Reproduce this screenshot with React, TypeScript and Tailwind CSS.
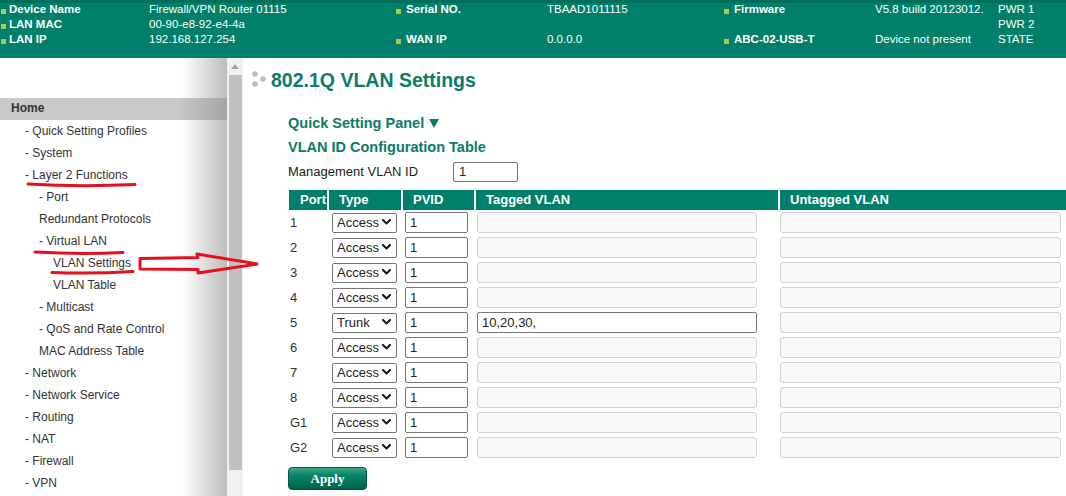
import React from "react";

const sideItems: [string, number][] = [
  ["- Quick Setting Profiles", 25],
  ["- System", 25],
  ["- Layer 2 Functions", 25],
  ["- Port", 39],
  ["Redundant Protocols", 39],
  ["- Virtual LAN", 39],
  ["VLAN Settings", 53],
  ["VLAN Table", 53],
  ["- Multicast", 39],
  ["- QoS and Rate Control", 39],
  ["MAC Address Table", 39],
  ["- Network", 25],
  ["- Network Service", 25],
  ["- Routing", 25],
  ["- NAT", 25],
  ["- Firewall", 25],
  ["- VPN", 25],
];

const rows = [
  { port: "1", type: "Access", tagged: "" },
  { port: "2", type: "Access", tagged: "" },
  { port: "3", type: "Access", tagged: "" },
  { port: "4", type: "Access", tagged: "" },
  { port: "5", type: "Trunk", tagged: "10,20,30," },
  { port: "6", type: "Access", tagged: "" },
  { port: "7", type: "Access", tagged: "" },
  { port: "8", type: "Access", tagged: "" },
  { port: "G1", type: "Access", tagged: "" },
  { port: "G2", type: "Access", tagged: "" },
];

function Bullet({ mr }: { mr: string }) {
  return <span className={`inline-block w-[5px] h-[5px] bg-[#a9c94f] mt-[4px] shrink-0 ${mr}`} />;
}

function Label({ text, first }: { text: string; first?: boolean }) {
  return (
    <div className={`flex items-center font-bold whitespace-nowrap ${first ? "pl-[1px]" : ""}`}>
      <Bullet mr={first ? "mr-[3px]" : "mr-[5px]"} />
      {text}
    </div>
  );
}

function Select({ value }: { value: string }) {
  return (
    <div className="relative w-[65px] h-[20px]">
      <select
        defaultValue={value}
        className="appearance-none w-[65px] h-[20px] border border-[#767676] rounded-[2px] bg-white text-[13px] leading-[18px] pl-[4px] text-[#222] outline-none"
      >
        <option>Access</option>
        <option>Trunk</option>
        <option>Hybrid</option>
      </select>
      <svg className="absolute right-[6px] top-[6px] pointer-events-none" width="9" height="6" viewBox="0 0 9 6">
        <path d="M1 1 L4.5 4.5 L8 1" fill="none" stroke="#111" strokeWidth="2" strokeLinecap="round" strokeLinejoin="round" />
      </svg>
    </div>
  );
}

export default function App() {
  return (
    <div className="relative w-[1066px] h-[496px] overflow-hidden bg-white font-['Liberation_Sans',Arial,sans-serif]">
      {/* Header */}
      <header className="h-[58px] bg-[linear-gradient(#00705c_0px,#00705c_3px,#00806a_3px)] text-white text-[11.5px] leading-[15px] pt-[2px]">
        <div className="grid grid-cols-[149px_247px_151px_177px_151px_123px_1fr] grid-rows-[15px_15px_15px]">
          <Label text="Device Name" first />
          <div>Firewall/VPN Router 01115</div>
          <Label text="Serial NO." />
          <div>TBAAD1011115</div>
          <Label text="Firmware" />
          <div className="whitespace-nowrap">V5.8 build 20123012.</div>
          <div>PWR 1</div>

          <Label text="LAN MAC" first />
          <div>00-90-e8-92-e4-4a</div>
          <div />
          <div />
          <div />
          <div />
          <div>PWR 2</div>

          <Label text="LAN IP" first />
          <div>192.168.127.254</div>
          <Label text="WAN IP" />
          <div>0.0.0.0</div>
          <Label text="ABC-02-USB-T" />
          <div className="whitespace-nowrap">Device not present</div>
          <div>STATE</div>
        </div>
      </header>

      <div className="flex h-[438px]">
        {/* Sidebar */}
        <nav className="w-[227px] shrink-0 overflow-hidden bg-[linear-gradient(to_right,#ffffff_0%,#ffffff_80%,#bdbdbd_100%)] pt-[40px] text-[12px] text-[#333]">
          <div className="h-[22px] leading-[21px] pl-[11px] font-bold bg-[linear-gradient(to_right,#c9c9c9_0%,#c9c9c9_78%,#a4a4a4_100%)]">
            Home
          </div>
          {sideItems.map(([t, pl]) => (
            <div key={t} className="h-[22px] leading-[22px] whitespace-nowrap" style={{ paddingLeft: pl }}>
              {t}
            </div>
          ))}
        </nav>

        {/* Scrollbar */}
        <div className="w-[16px] shrink-0 bg-[#f1f1f1] flex flex-col">
          <div className="h-[17px] flex items-center justify-center">
            <svg width="8" height="5" viewBox="0 0 8 5">
              <path d="M0 5 L4 0 L8 5 Z" fill="#a3a3a3" />
            </svg>
          </div>
          <div className="ml-[2px] mr-[1px] h-[395px] bg-[#c1c1c1]" />
        </div>

        {/* Main */}
        <main className="flex-1 pl-[9px] pt-[10px] text-[#222]">
          <div className="flex items-center h-[22px]">
            <svg width="19" height="22" viewBox="0 0 19 22" className="shrink-0">
              <circle cx="3" cy="6" r="2.8" fill="#bdbdbd" />
              <circle cx="3" cy="16" r="2.8" fill="#bdbdbd" />
              <circle cx="11" cy="11" r="2.8" fill="#bdbdbd" />
            </svg>
            <h1 className="text-[19.5px] leading-[22px] font-bold text-[#0b7c67] whitespace-nowrap pt-[1px]">802.1Q VLAN Settings</h1>
          </div>

          <div className="pl-[36px]">
            <div className="mt-[21px] h-[24px] leading-[24px] text-[14.5px] font-bold text-[#0b7c67] flex items-center gap-[5px]">
              Quick Setting Panel
              <svg width="10" height="9" viewBox="0 0 10 9">
                <path d="M0 0 L10 0 L5 9 Z" fill="#0b7c67" />
              </svg>
            </div>
            <div className="h-[24px] leading-[24px] text-[14.5px] font-bold text-[#0b7c67] whitespace-nowrap">
              VLAN ID Configuration Table
            </div>
            <div className="h-[25px] flex items-center text-[13px]">
              <span className="w-[165px]">Management VLAN ID</span>
              <input
                defaultValue="1"
                className="w-[65px] h-[20px] border border-[#767676] rounded-[2px] bg-white text-[13px] pl-[5px] outline-none"
              />
            </div>

            {/* Table */}
            <div className="mt-[6px] ml-[1px] grid grid-cols-[38px_72px_71px_302px_1fr] gap-x-[2px] text-[13px]">
              {["Port", "Type", "PVID", "Tagged VLAN", "Untagged VLAN"].map((h) => (
                <div key={h} className={`h-[20px] leading-[20px] bg-[#00806a] text-white font-bold whitespace-nowrap ${h === "Port" ? "pl-[11px]" : "pl-[10px]"}`}>
                  {h}
                </div>
              ))}
              {rows.map((r) => (
                <React.Fragment key={r.port}>
                  <div className="h-[25px] flex items-center pl-[1px] text-[#333]">{r.port}</div>
                  <div className="h-[25px] flex items-center pl-[3px]">
                    <Select value={r.type} />
                  </div>
                  <div className="h-[25px] flex items-center pl-[2px]">
                    <input
                      defaultValue="1"
                      className="w-[63px] h-[21px] border border-[#767676] rounded-[2px] bg-white text-[13px] pl-[4px] outline-none"
                    />
                  </div>
                  <div className="h-[25px] flex items-center pl-[1px]">
                    {r.type === "Trunk" ? (
                      <input
                        defaultValue={r.tagged}
                        className="w-[280px] h-[21px] border border-[#767676] rounded-[2px] bg-white text-[13px] pl-[4px] outline-none"
                      />
                    ) : (
                      <input
                        disabled
                        className="w-[280px] h-[21px] border border-[#d2d2d2] rounded-[3px] bg-[#f8f8f8] text-[13px] pl-[4px]"
                      />
                    )}
                  </div>
                  <div className="h-[25px] flex items-center">
                    <input
                      disabled
                      className="w-[281px] h-[21px] border border-[#d2d2d2] rounded-[3px] bg-[#f8f8f8] text-[13px] pl-[4px]"
                    />
                  </div>
                </React.Fragment>
              ))}
            </div>

            <button className="mt-[7px] w-[79px] h-[23px] rounded-[4px] border border-[#005a47] bg-[linear-gradient(to_bottom,#3aa98b_0%,#0a8467_35%,#00735a_70%,#005f4b_100%)] text-white font-bold text-[13px] font-['Liberation_Serif',serif]">
              Apply
            </button>
          </div>
        </main>
      </div>

      {/* Red annotations */}
      <svg className="absolute inset-0 pointer-events-none" width="1066" height="496" viewBox="0 0 1066 496">
        <path d="M28 184 Q80 187 135 184.5" fill="none" stroke="#e3101f" strokeWidth="3" strokeLinecap="round" />
        <path d="M35 252 Q80 254.5 123 252.5" fill="none" stroke="#e3101f" strokeWidth="3" strokeLinecap="round" />
        <path d="M52 272.5 Q92 274 133 271.5" fill="none" stroke="#e3101f" strokeWidth="3" strokeLinecap="round" />
        <path
          d="M140 258.5 L198 257.5 L197 254 L257 264 L198 273 L198 269.5 L140 269 Z"
          fill="none"
          stroke="#e3101f"
          strokeWidth="3"
          strokeLinejoin="round"
        />
      </svg>
    </div>
  );
}
